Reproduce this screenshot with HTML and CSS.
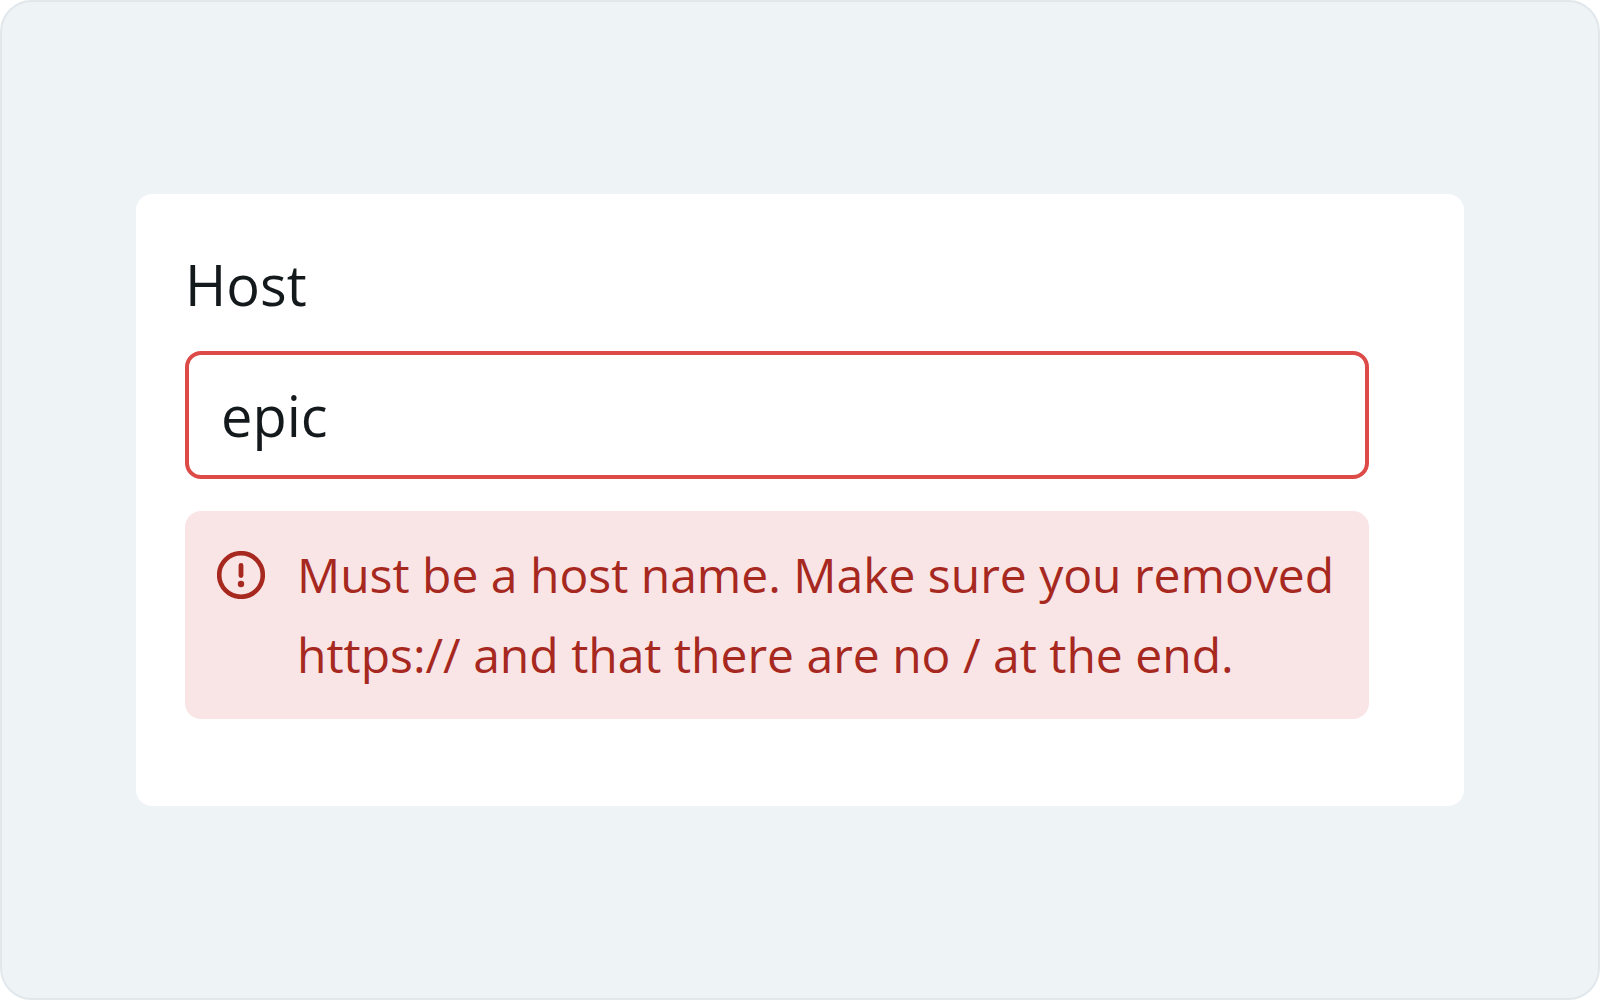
FILE: index.html
```html
<!DOCTYPE html>
<html lang="en">
<head>
<meta charset="utf-8">
<title>Host</title>
<link rel="stylesheet" href="styles.css">
</head>
<body>
<main class="stage">
  <form class="card">
    <label class="label" for="host">Host</label>
    <input class="input" id="host" type="text" value="epic" aria-invalid="true" aria-describedby="host-error">
    <div class="alert" id="host-error">
      <svg class="alert-icon" viewBox="0 0 48 48" fill="none" stroke="currentColor" aria-hidden="true">
        <circle cx="24" cy="24" r="21.8" stroke-width="4.6"/>
        <path d="M24 14.4v10.2" stroke-width="4.8" stroke-linecap="round"/>
        <circle cx="24" cy="33" r="3.2" fill="currentColor" stroke="none"/>
      </svg>
      <p class="alert-text">Must be a host name. Make sure you removed https:// and that there are no / at the end.</p>
    </div>
  </form>
</main>
</body>
</html>
```

FILE: styles.css
```css
* {
  box-sizing: border-box;
}

body {
  margin: 0;
  background: #fff;
  color: #14191c;
  font-family: "Open Sans", "Noto Sans", sans-serif;
}

.stage {
  display: flex;
  align-items: center;
  min-height: 100vh;
  padding: 0 134px;
  border: 2px solid #e1e7eb;
  border-radius: 32px;
  background: #eef3f6;
}

.card {
  display: flex;
  flex: 1;
  flex-direction: column;
  padding: 51px 95px 87px 49px;
  border-radius: 16px;
  background: #fff;
}

.label {
  margin-bottom: 28px;
  font-size: 56px;
  line-height: 78px;
}

.input {
  width: 100%;
  height: 128px;
  margin: 0 0 32px;
  padding: 0 32px;
  border: 4px solid #dd4b48;
  border-radius: 16px;
  outline: 0;
  background: #fff;
  color: inherit;
  font: inherit;
  font-size: 56px;
}

.alert {
  display: flex;
  gap: 32px;
  padding: 24px 24px 24px 32px;
  border-radius: 16px;
  background: #f9e5e5;
  color: #a6281f;
}

.alert-icon {
  flex: none;
  width: 48px;
  height: 48px;
  margin-top: 16px;
}

.alert-text {
  margin: 0;
  font-size: 48px;
  line-height: 80px;
}
```
